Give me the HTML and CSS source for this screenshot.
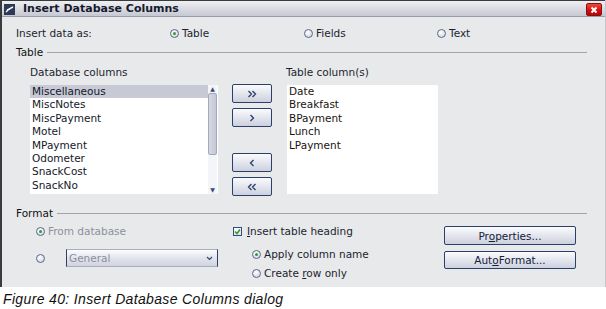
FILE: index.html
```html
<!DOCTYPE html>
<html lang="en">
<head>
  <meta charset="UTF-8" />
  <title>Insert Database Columns</title>
  <link rel="stylesheet" href="styles.css">
</head>
<body>
  <div class="dialog">
    <div class="titlebar">
      <span class="app-icon">
        <svg width="11" height="11" viewBox="0 0 11 11"><rect width="11" height="11" fill="#2d3a55"/><path d="M2 8 L5 5 L9 3 M3 6 L6 5" stroke="#fff" stroke-width="1.4" fill="none"/></svg>
      </span>
      <span class="title">Insert Database Columns</span>
      <span class="close">
        <svg width="8" height="8" viewBox="0 0 8 8"><path d="M1.5 1.5 L6.5 6.5 M6.5 1.5 L1.5 6.5" stroke="#fff" stroke-width="2"/></svg>
      </span>
    </div>

    <div class="body">
      <div class="insert-row">
        <span class="insert-label">Insert data as:</span>
        <label class="opt opt-table"><span class="radio on"></span><span>Table</span></label>
        <label class="opt opt-fields"><span class="radio"></span><span>Fields</span></label>
        <label class="opt"><span class="radio"></span><span>Text</span></label>
      </div>

      <div class="group-head">Table</div>
      <div class="table-area">
        <div class="col-left">
          <div class="list-label">Database columns</div>
          <div class="listbox">
            <ul class="items">
              <li class="selected">Miscellaneous</li>
              <li>MiscNotes</li>
              <li>MiscPayment</li>
              <li>Motel</li>
              <li>MPayment</li>
              <li>Odometer</li>
              <li>SnackCost</li>
              <li>SnackNo</li>
            </ul>
            <div class="scrollbar">
              <span class="sb-arrow">&#9650;</span>
              <span class="sb-thumb"></span>
              <span class="sb-track"></span>
              <span class="sb-arrow">&#9660;</span>
            </div>
          </div>
        </div>

        <div class="move-buttons">
          <button class="btn move" title="Add all">
            <svg width="10" height="8" viewBox="0 0 10 8"><path d="M1.5 1 L4.5 4 L1.5 7 M5.5 1 L8.5 4 L5.5 7" /></svg>
          </button>
          <button class="btn move" title="Add">
            <svg width="10" height="8" viewBox="0 0 10 8"><path d="M3.5 1 L6.5 4 L3.5 7" /></svg>
          </button>
          <button class="btn move gap" title="Remove">
            <svg width="10" height="8" viewBox="0 0 10 8"><path d="M6.5 1 L3.5 4 L6.5 7" /></svg>
          </button>
          <button class="btn move" title="Remove all">
            <svg width="10" height="8" viewBox="0 0 10 8"><path d="M4.5 1 L1.5 4 L4.5 7 M8.5 1 L5.5 4 L8.5 7" /></svg>
          </button>
        </div>

        <div class="col-right">
          <div class="list-label">Table column(s)</div>
          <div class="listbox right">
            <ul class="items">
              <li>Date</li>
              <li>Breakfast</li>
              <li>BPayment</li>
              <li>Lunch</li>
              <li>LPayment</li>
            </ul>
          </div>
        </div>
      </div>

      <div class="group-head format-head">Format</div>
      <div class="format-area">
        <div class="fmt-left">
          <label class="opt disabled"><span class="radio on"></span><span>From database</span></label>
          <div class="combo-row">
            <span class="radio"></span>
            <div class="combo">
              <span>General</span>
              <svg class="combo-arrow" width="7" height="5" viewBox="0 0 7 5"><path d="M1 1 L3.5 3.5 L6 1" /></svg>
            </div>
          </div>
        </div>
        <div class="fmt-mid">
          <label class="check-opt"><span class="checkbox">
            <svg width="7" height="7" viewBox="0 0 7 7"><path d="M1 3.5 L3 5.5 L6 1.5" stroke="#2f9a2f" stroke-width="1.5" fill="none"/></svg>
          </span><span><u>I</u>nsert table heading</span></label>
          <label class="opt sub apply"><span class="radio on"></span><span>Apply column name</span></label>
          <label class="opt sub create"><span class="radio"></span><span>Create <u>r</u>ow only</span></label>
        </div>
        <div class="fmt-right">
          <button class="btn wide">Pr<u>o</u>perties...</button>
          <button class="btn wide">Aut<u>o</u>Format...</button>
        </div>
      </div>
    </div>
  </div>
  <p class="caption">Figure 40: Insert Database Columns dialog</p>
</body>
</html>
```

FILE: styles.css
```css
body {
  margin: 0;
  background: #ffffff;
  font-family: "DejaVu Sans", sans-serif;
  font-size: 10.5px;
  color: #1b1f2e;
}
.dialog {
  width: 606px;
  height: 287px;
  box-sizing: border-box;
  border-left: 2px solid #3c3c3c;
  border-right: 1px solid #c4c6cc;
  background: #e8e9eb;
}
.titlebar {
  height: 17px;
  box-sizing: border-box;
  border-top: 1px solid #3a3a3a;
  border-bottom: 1px solid #9a9caa;
  background: linear-gradient(#eeeff3, #d9dae1 55%, #c6c8d2);
  display: flex;
  align-items: center;
  padding: 0 3px 0 2px;
}
.app-icon {
  display: flex;
  width: 11px;
  height: 11px;
  margin-top: 2px;
}
.title {
  margin-left: 8px;
  font-weight: bold;
  font-size: 11px;
  color: #161a2c;
  flex: 1;
}
.close {
  width: 16px;
  height: 13px;
  margin-top: 2px;
  box-sizing: border-box;
  border: 1px solid #8a1010;
  border-radius: 2px;
  background: linear-gradient(#f04a3a, #d01010 60%, #b00808);
  display: flex;
  align-items: center;
  justify-content: center;
}
.body {
  padding: 0 18px 0 14px;
}
.insert-row {
  display: flex;
  align-items: center;
  height: 14px;
  margin-top: 9px;
}
.insert-label {
  width: 154px;
}
.opt {
  display: flex;
  align-items: center;
  height: 14px;
}
.opt-table {
  width: 134px;
}
.opt-fields {
  width: 133px;
}
.radio {
  width: 9px;
  height: 9px;
  box-sizing: border-box;
  border-radius: 50%;
  border: 1px solid #5a6a8c;
  background: radial-gradient(circle at 40% 35%, #ffffff, #c9cdd8);
  margin-right: 3px;
  position: relative;
}
.radio.on::after {
  content: "";
  position: absolute;
  left: 2px;
  top: 2px;
  width: 3px;
  height: 3px;
  border-radius: 50%;
  background: #2e9a35;
}
.group-head {
  display: flex;
  align-items: center;
  height: 14px;
  margin-top: 5px;
  color: #111;
}
.group-head::after {
  content: "";
  flex: 1;
  height: 1px;
  background: #a2a4aa;
  margin-left: 4px;
}
.format-head {
  margin-top: 10px;
}
.table-area {
  display: flex;
  align-items: flex-start;
  padding-left: 14px;
  margin-top: 7px;
}
.list-label {
  height: 14px;
  margin-bottom: 5px;
}
.col-left {
  width: 188px;
}
.col-right {
  width: 151px;
  margin-left: 15px;
}
.col-right .list-label {
  margin-left: -1px;
}
.listbox {
  height: 109px;
  background: #ffffff;
  display: flex;
}
.items {
  list-style: none;
  margin: 0;
  padding: 0;
  flex: 1;
}
.items li {
  height: 13.4px;
  line-height: 13px;
  padding-left: 2px;
  color: #14182a;
}
.items li.selected {
  background: #c7c9d5;
}
.right .items li {
  color: #1a1410;
}
.scrollbar {
  width: 9px;
  margin-right: 1px;
  display: flex;
  flex-direction: column;
  background: #f4f5f8;
}
.sb-arrow {
  height: 8px;
  font-size: 6px;
  line-height: 8px;
  text-align: center;
  color: #3a4a78;
}
.sb-thumb {
  height: 62px;
  box-sizing: border-box;
  border: 1px solid #a4a8bc;
  border-radius: 2px;
  background: linear-gradient(90deg, #d6d8e2, #c4c7d6);
}
.sb-track {
  flex: 1;
}
.move-buttons {
  display: flex;
  flex-direction: column;
  width: 40px;
  margin-left: 14px;
  margin-top: 18px;
  gap: 5px;
}
.btn {
  font-family: "DejaVu Sans", sans-serif;
  font-size: 10.5px;
  color: #14203c;
  box-sizing: border-box;
  border: 1px solid #2b3f6b;
  border-radius: 2px;
  background: linear-gradient(#fbfbfd, #e6e8ef 45%, #cdd1de);
  padding: 0;
}
.move {
  height: 19px;
  display: flex;
  align-items: center;
  justify-content: center;
}
.move svg path {
  fill: none;
  stroke: #2a3c6e;
  stroke-width: 1.3;
}
.move.gap {
  margin-top: 21px;
}
.format-area {
  display: flex;
  align-items: flex-start;
  margin-top: 4px;
}
.fmt-left {
  width: 197px;
  padding-left: 20px;
}
.disabled {
  color: #8c909c;
}
.combo-row {
  display: flex;
  align-items: center;
  margin-top: 11px;
}
.combo {
  width: 152px;
  height: 18px;
  box-sizing: border-box;
  margin-left: 18px;
  border: 1px solid #a8adbf;
  border-left-color: #2b3f6b;
  border-right-color: #2b3f6b;
  background: linear-gradient(#fdfdfe, #e2e4ec 50%, #d1d4df);
  color: #8c909c;
  padding-left: 2px;
  display: flex;
  align-items: center;
}
.combo-arrow {
  margin-left: auto;
  margin-right: 4px;
}
.combo-arrow path {
  fill: none;
  stroke: #34466e;
  stroke-width: 1.2;
}
.fmt-mid {
  width: 211px;
}
.check-opt {
  display: flex;
  align-items: center;
  height: 14px;
}
.checkbox {
  width: 9px;
  height: 9px;
  box-sizing: border-box;
  border: 1px solid #3a4a7a;
  background: linear-gradient(#ffffff, #dde0e8);
  margin-right: 5px;
  display: flex;
  align-items: center;
  justify-content: center;
}
.sub {
  margin-left: 19px;
}
.apply {
  margin-top: 9px;
}
.create {
  margin-top: 5px;
}
.fmt-right {
  width: 132px;
  display: flex;
  flex-direction: column;
  gap: 6px;
  margin-top: 2px;
}
.wide {
  height: 19px;
}
.wide + .wide {
  height: 18px;
}
.caption {
  margin: 4px 0 0 3px;
  font-family: "Liberation Sans", Arial, sans-serif;
  font-style: italic;
  font-size: 14px;
  letter-spacing: 0.35px;
  color: #111;
}
```
